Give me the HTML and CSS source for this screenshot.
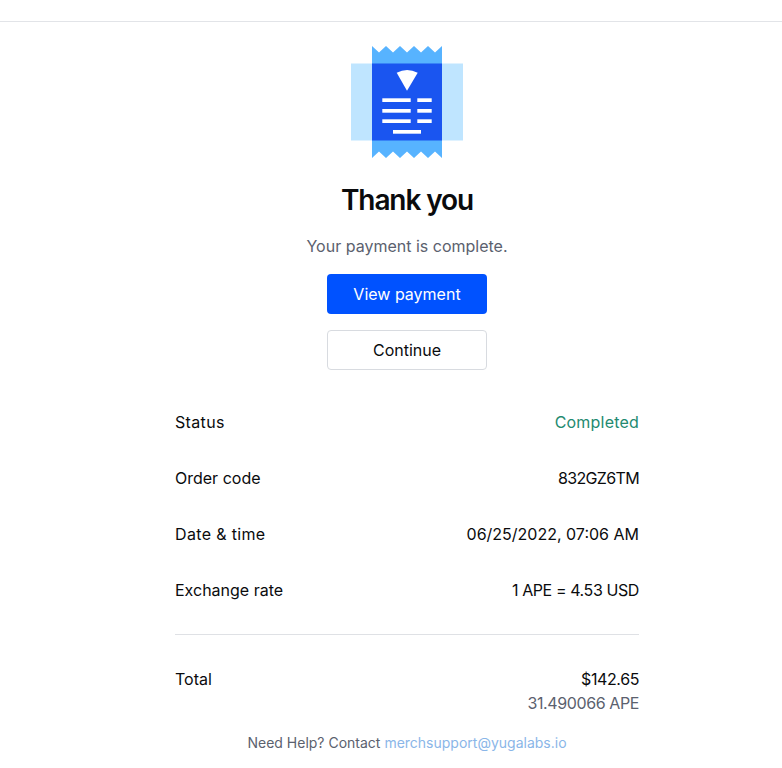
FILE: index.html
```html
<!DOCTYPE html>
<html lang="en">
<head>
  <meta charset="UTF-8">
  <title>Thank you</title>
  <link rel="stylesheet" href="styles.css">
</head>
<body>

<div class="topbar"></div>

<div class="container">

  <!-- Receipt icon -->
  <svg class="receipt" width="112" height="112" viewBox="0 0 112 112">
    <rect x="0" y="17.5" width="112" height="77" fill="#bfe5ff"/>
    <path d="M21 0l7 6.5 7-6.5 7 6.5 7-6.5 7 6.5 7-6.5 7 6.5 7-6.5 7 6.5 7-6.5V112l-7-6.5-7 6.5-7-6.5-7 6.5-7-6.5-7 6.5-7-6.5-7 6.5-7-6.5-7 6.5z" fill="#57b3ff"/>
    <rect x="21" y="17.5" width="70" height="77" fill="#1a55f0"/>
    <path d="M45.7 26.7Q56 21.5 66.7 26.7L56 44.7z" fill="#fff"/>
    <g fill="#fff">
      <rect x="31.3" y="52.3" width="28.4" height="3.7"/>
      <rect x="66.3" y="52.3" width="14.4" height="3.7"/>
      <rect x="31.3" y="63" width="28.4" height="3.7"/>
      <rect x="66.3" y="63" width="14.4" height="3.7"/>
      <rect x="31.3" y="73.3" width="28.4" height="3.7"/>
      <rect x="66.3" y="73.3" width="14.4" height="3.7"/>
      <rect x="42" y="84" width="28" height="3.7"/>
    </g>
  </svg>

  <h1>Thank you</h1>
  <p class="subtitle">Your payment is complete.</p>

  <a class="btn btn-primary" href="#">View payment</a>
  <a class="btn btn-secondary" href="#">Continue</a>

  <!-- Payment details -->
  <div class="details">
    <div class="row"><span class="label-wide">Status</span><span class="completed">Completed</span></div>
    <div class="row"><span>Order code</span><span class="code">832GZ6TM</span></div>
    <div class="row"><span class="label-wide">Date &amp; time</span><span>06/25/2022, 07:06 AM</span></div>
    <div class="row"><span>Exchange rate</span><span class="tight">1 APE = 4.53 USD</span></div>
  </div>

  <div class="total">
    <span>Total</span>
    <div class="amounts">
      <div class="tight">$142.65</div>
      <div class="muted tight">31.490066 APE</div>
    </div>
  </div>

  <p class="help">Need Help? Contact <a href="#">merchsupport@yugalabs.io</a></p>

</div>

</body>
</html>
```

FILE: styles.css
```css
body {
  font-family: 'Inter', 'Liberation Sans', sans-serif;
  font-size: 16px;
  line-height: 24px;
  color: #0a0b0d;
  background: white;
  margin: 0;
  padding: 0;
}

.topbar {
  height: 21px;
  border-bottom: 1px solid #e2e4e8;
}

.container {
  display: flex;
  flex-direction: column;
  align-items: center;
  padding: 24px 0 0 32px;
}

.receipt {
  display: block;
}

h1 {
  margin: 24px 0 0;
  font-size: 28px;
  line-height: 36px;
  font-weight: 600;
  letter-spacing: -1.1px;
}

.subtitle {
  margin: 16px 0 0;
  color: #5b616e;
}

.btn {
  display: block;
  box-sizing: border-box;
  width: 160px;
  height: 40px;
  margin-top: 16px;
  line-height: 38px;
  text-align: center;
  text-decoration: none;
  border-radius: 4px;
  border: 1px solid transparent;
}

.btn-primary {
  margin-top: 16px;
  background: #0052ff;
  color: white;
}

.btn-secondary {
  background: white;
  color: #0a0b0d;
  border-color: #d8dbe0;
}

.details {
  width: 464px;
  margin-top: 24px;
}

.row {
  display: flex;
  justify-content: space-between;
  padding: 16px 0;
}

.label-wide {
  letter-spacing: 0.35px;
}

.tight {
  letter-spacing: -0.4px;
}

.code {
  letter-spacing: -0.65px;
}

.completed {
  color: #238a70;
  letter-spacing: 0.2px;
}

.total {
  width: 464px;
  display: flex;
  justify-content: space-between;
  margin-top: 16px;
  padding-top: 32px;
  border-top: 1px solid #dfe1e5;
}

.amounts {
  text-align: right;
}

.muted {
  color: #5b616e;
}

.help {
  margin: 16px 0 0;
  font-size: 14px;
  color: #5b616e;
}

.help a {
  color: #8ab6e8;
  text-decoration: none;
}
```
